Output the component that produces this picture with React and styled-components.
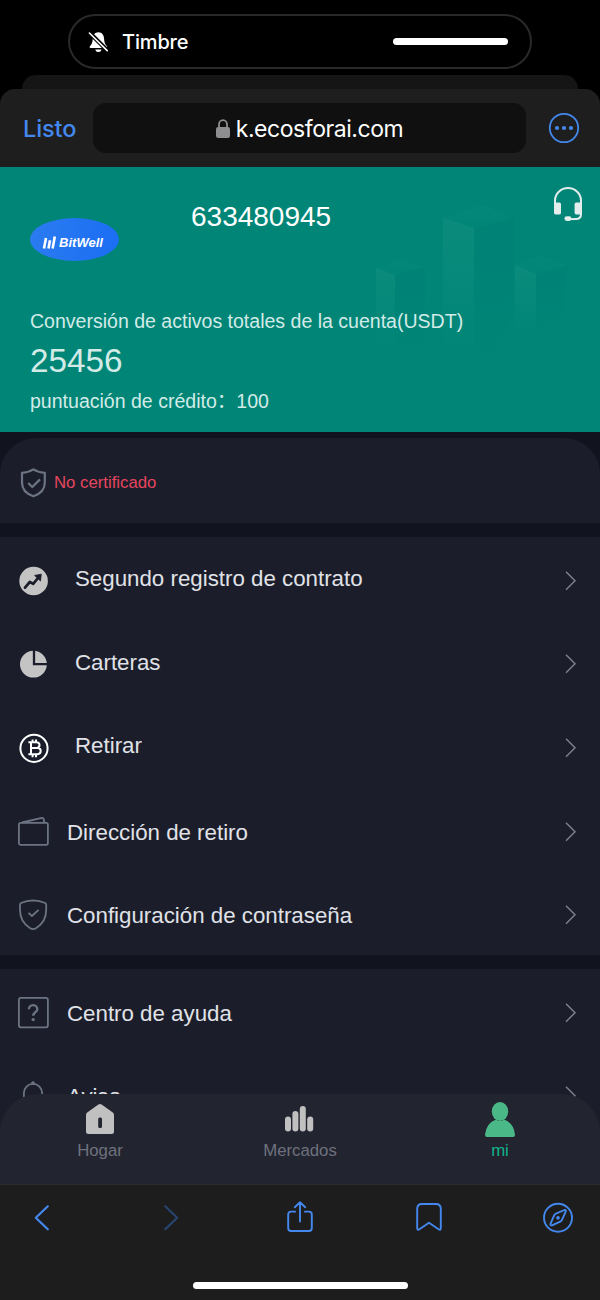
import React from "react";
import styled, { createGlobalStyle } from "styled-components";

const GlobalStyle = createGlobalStyle`
  * {
    box-sizing: border-box;
  }
  body {
    margin: 0;
    background-color: #000;
    font-family: "Liberation Sans", "Noto Sans CJK SC", sans-serif;
  }
  svg {
    display: block;
    flex-shrink: 0;
  }
`;

const Phone = styled.div`
  display: flex;
  flex-direction: column;
  width: 600px;
  height: 1300px;
  overflow: hidden;
  background-color: #000;
`;

const StatusArea = styled.div`
  display: flex;
  flex-direction: column;
  align-items: center;
  padding-top: 14px;
  height: 89px;
`;

const RingPill = styled.div`
  display: flex;
  align-items: center;
  width: 464px;
  height: 55px;
  flex-shrink: 0;
  padding: 0 22px 0 18px;
  border: 2px solid #292929;
  border-radius: 28px;
`;

const RingText = styled.span`
  flex: 1;
  margin-left: 12px;
  color: #fff;
  font-family: Inter, sans-serif;
  font-size: 20px;
  font-weight: 500;
  letter-spacing: -0.15px;
`;

const RingLevel = styled.div`
  width: 115px;
  height: 7px;
  border-radius: 4px;
  background-color: #fff;
`;

const BackSheet = styled.div`
  width: 556px;
  height: 14px;
  margin-top: 6px;
  border-radius: 14px 14px 0 0;
  background-color: #151515;
`;

const BrowserBar = styled.div`
  display: flex;
  align-items: center;
  height: 78px;
  padding: 0 20px 0 23px;
  border-radius: 15px 15px 0 0;
  background-color: #1e1e1e;
`;

const Done = styled.span`
  width: 70px;
  color: #4488ee;
  font-family: Inter, sans-serif;
  font-size: 23.5px;
  font-weight: 500;
  letter-spacing: -0.1px;
`;

const Address = styled.div`
  display: flex;
  align-items: center;
  justify-content: center;
  gap: 6px;
  width: 433px;
  height: 50px;
  margin-right: 22px;
  padding-top: 1px;
  border-radius: 13px;
  background-color: #101010;
  color: #fff;
  font-family: Inter, sans-serif;
  font-size: 23px;
  letter-spacing: -0.45px;
`;

const Page = styled.div`
  position: relative;
  height: 1017px;
  overflow: hidden;
  background-color: #11141f;
`;

const Hero = styled.div`
  position: relative;
  height: 265px;
  margin-bottom: 6px;
  padding: 20px 17px 0 30px;
  background-color: #008577;
  color: #d3ebe7;
`;

const HeroArt = styled.svg`
  position: absolute;
  top: 0;
  right: 0;
`;

const HeroTop = styled.div`
  position: relative;
  display: flex;
  align-items: flex-start;
  height: 118px;
`;

const Logo = styled.div`
  display: flex;
  align-items: center;
  justify-content: center;
  gap: 3px;
  width: 89px;
  height: 43px;
  margin-top: 31px;
  padding-top: 5px;
  padding-right: 4px;
  border-radius: 50%;
  background: linear-gradient(100deg, #2b7cf0, #1b6df3);
  color: #fff;
  font-size: 13px;
  font-style: italic;
  font-weight: 700;
`;

const UserId = styled.span`
  flex: 1;
  margin: 13px 0 0 72px;
  color: #fff;
  font-size: 28px;
  line-height: 34px;
`;

const HeroText = styled.div`
  position: relative;
  font-size: ${(props) => props.size || "19.55px"};
  line-height: ${(props) => props.height || "32px"};
  white-space: nowrap;
`;

const CertCard = styled.div`
  display: flex;
  align-items: center;
  height: 85px;
  padding: 4px 0 0 18px;
  margin-bottom: 14px;
  border-radius: 36px 36px 0 0;
  background-color: #1b1e2a;
`;

const CertText = styled.span`
  margin-left: 4px;
  color: #e6455f;
  font-size: 16.75px;
`;

const Menu = styled.div`
  margin-bottom: 14px;
  background-color: #1b1e2a;
`;

const MenuRow = styled.div`
  display: flex;
  align-items: center;
  height: 83.6px;
  padding: 4px 22px 0 18px;
`;

const MenuLabel = styled.span`
  flex: 1;
  padding-left: ${(props) => (props.$wide ? "25px" : "17px")};
  padding-top: ${(props) => (props.$wide ? "0" : "2px")};
  padding-bottom: ${(props) => (props.$wide ? "3px" : "0")};
  color: #e0e2e8;
  font-size: 22.3px;
  line-height: 26px;
`;

const TabBar = styled.div`
  position: absolute;
  left: 0;
  right: 0;
  bottom: 0;
  display: grid;
  grid-template-columns: repeat(3, 1fr);
  height: 90px;
  border-radius: 38px 38px 0 0;
  background-color: #222430;
`;

const Tab = styled.div`
  display: flex;
  flex-direction: column;
  align-items: center;
  padding-top: 6px;
  color: ${(props) => (props.$active ? "#12b48a" : "#6f727e")};
  font-size: 16.75px;
  line-height: 20px;

  svg {
    margin-bottom: 3px;
  }
`;

const Toolbar = styled.div`
  display: flex;
  flex-direction: column;
  align-items: center;
  height: 116px;
  border-top: 1px solid #2b2b2d;
  background-color: #1d1d1d;
`;

const ToolbarIcons = styled.div`
  display: flex;
  justify-content: space-between;
  width: 100%;
  height: 97px;
  padding: 16px 27px 0;
`;

const HomeIndicator = styled.div`
  width: 215px;
  height: 7px;
  border-radius: 4px;
  background-color: #fff;
`;

const MenuIcon = (props) => (
  <svg width="32" height="32" viewBox="0 0 32 32" fill="none" stroke="#6c7382" strokeWidth="1.8" strokeLinejoin="round">
    {props.children}
  </svg>
);

const ToolIcon = (props) => (
  <svg
    width="30"
    height="34"
    viewBox="0 0 30 34"
    fill="none"
    stroke={props.color || "#4488ee"}
    strokeWidth={props.weight || "1.9"}
    strokeLinecap="round"
    strokeLinejoin="round"
  >
    {props.children}
  </svg>
);

const Chevron = () => (
  <svg width="14" height="20" viewBox="0 0 14 20" fill="none" stroke="#7c7f8a" strokeWidth="1.5">
    <path d="M2 0.7L11 9.7L2 18.7" />
  </svg>
);

const TrendIcon = () => (
  <MenuIcon>
    <circle cx="15.6" cy="16" r="14.3" fill="#c4c4c4" stroke="none" />
    <path d="M7 22.6L11.8 17L15.2 18.8L20 13" stroke="#1b1e2a" strokeWidth="2.7" strokeLinecap="round" />
    <path d="M16.6 10.4L23.3 9.2L22.5 16Z" fill="#1b1e2a" stroke="#1b1e2a" strokeWidth="0.8" />
  </MenuIcon>
);

const PieIcon = () => (
  <MenuIcon>
    <circle cx="15.4" cy="16.2" r="13.4" fill="#c4c4c4" stroke="none" />
    <path d="M16 2V16.2H30" stroke="#1b1e2a" strokeWidth="2.3" strokeLinejoin="miter" />
  </MenuIcon>
);

const BitcoinIcon = () => (
  <MenuIcon>
    <g stroke="#fff" strokeWidth="2">
      <circle cx="16" cy="16.3" r="13.6" />
      <path d="M10.4 10.2H18.6A2.9 2.9 0 0 1 18.6 16H13M18.6 16H19.6A3.1 3.1 0 0 1 19.6 22.2H10.4M13 10.2V22.2M14.6 7.4V10.2M18 7.4V10.2M14.6 22.2V25.2M18 22.2V25.2" />
    </g>
  </MenuIcon>
);

const WalletIcon = () => (
  <MenuIcon>
    <rect x="0.9" y="6.8" width="29" height="22" rx="1.8" />
    <path d="M4 6.5L23.8 1.9Q25.3 1.6 25.6 3L26.4 6.5" />
  </MenuIcon>
);

const PasswordIcon = () => (
  <MenuIcon>
    <path d="M15.1 1.4Q21.5 1.6 27.2 4Q28.2 4.5 28.2 5.6V11Q28.2 23 18 29.2Q15.1 31 12.2 29.2Q2 23 2 11V5.6Q2 4.5 3 4Q8.7 1.6 15.1 1.4Z" />
    <path d="M10.5 13.8L13.9 17L20.6 10.8" />
  </MenuIcon>
);

const HelpIcon = () => (
  <MenuIcon>
    <rect x="0.9" y="0.9" width="29" height="29.4" rx="2" />
    <path d="M10.9 12.2A4.2 4.1 0 0 1 19.3 12.2C19.3 15 15.2 15.4 15.2 18.8" strokeWidth="2.4" />
    <circle cx="15.2" cy="22.6" r="1.7" fill="#6c7382" stroke="none" />
  </MenuIcon>
);

const BellIcon = () => (
  <MenuIcon>
    <path d="M5.9 25V13A9.1 9.1 0 0 1 24.1 13V25M2 25H28" />
    <circle cx="15" cy="3.2" r="1" fill="#6c7382" />
  </MenuIcon>
);

const accountRows = [
  { id: 0, text: "Segundo registro de contrato", icon: <TrendIcon />, wide: true },
  { id: 1, text: "Carteras", icon: <PieIcon />, wide: true },
  { id: 2, text: "Retirar", icon: <BitcoinIcon />, wide: true },
  { id: 3, text: "Dirección de retiro", icon: <WalletIcon /> },
  { id: 4, text: "Configuración de contraseña", icon: <PasswordIcon /> },
];

const helpRows = [
  { id: 0, text: "Centro de ayuda", icon: <HelpIcon /> },
  { id: 1, text: "Aviso", icon: <BellIcon /> },
];

const MenuList = ({ rows }) => (
  <Menu>
    {rows.map((row) => (
      <MenuRow key={row.id}>
        {row.icon}
        <MenuLabel $wide={row.wide}>{row.text}</MenuLabel>
        <Chevron />
      </MenuRow>
    ))}
  </Menu>
);

const fades = [
  { id: "light", color: "#2fa08d", opacity: 0.22 },
  { id: "dark", color: "#006f68", opacity: 0.12 },
];

const HeroBars = () => (
  <HeroArt width="260" height="265" viewBox="0 0 260 265">
    <defs>
      {fades.map((f) => (
        <linearGradient key={f.id} id={f.id} x1="0" y1="0" x2="0" y2="1">
          <stop offset="0" stopColor={f.color} stopOpacity={f.opacity} />
          <stop offset="1" stopColor={f.color} stopOpacity="0" />
        </linearGradient>
      ))}
    </defs>
    <g fill="url(#light)">
      <path d="M103 51L134 61V190H103Z" />
      <path d="M36 101L55 108V185H36Z" />
      <path d="M175 98L196 107V170H175Z" />
    </g>
    <g fill="url(#light)" opacity="0.5">
      <path d="M103 51L143 38L174 51L134 61Z" />
      <path d="M36 101L59 93L85 100L55 108Z" />
      <path d="M175 98L200 89L228 99L196 107Z" />
    </g>
    <g fill="url(#dark)">
      <path d="M134 61L174 51V145L148 200H134Z" />
      <path d="M55 108L85 100V185H55Z" />
      <path d="M196 107L228 99L222 150L196 166Z" />
    </g>
  </HeroArt>
);

const App = () => {
  return (
    <Phone>
      <GlobalStyle />
      <StatusArea>
        <RingPill>
          <svg width="22" height="22" viewBox="0 0 22 22">
            <path d="M10.4 1.3C6.8 1.3 4.8 4.2 4.7 8C4.6 12 3.4 13.4 1.8 15.2Q1 17 2.6 17H18.2Q19.8 17 19 15.2C17.4 13.4 16.2 12 16.1 8C16 4.2 14 1.3 10.4 1.3Z" fill="#fff" />
            <path d="M7.2 18.5H13.6Q12.9 21 10.4 21Q7.9 21 7.2 18.5Z" fill="#fff" />
            <path d="M1.4 1.6L19.4 19.4" stroke="#000" strokeWidth="4.2" />
            <path d="M1.4 2L19.2 19.6" stroke="#fff" strokeWidth="1.6" strokeLinecap="round" />
          </svg>
          <RingText>Timbre</RingText>
          <RingLevel />
        </RingPill>
        <BackSheet />
      </StatusArea>
      <BrowserBar>
        <Done>Listo</Done>
        <Address>
          <svg width="14" height="20" viewBox="0 0 14 20">
            <rect x="0" y="8" width="14" height="11" rx="2.2" fill="#8e8e90" />
            <path d="M3 9V5.5A4 4.3 0 0 1 11 5.5V9" fill="none" stroke="#8e8e90" strokeWidth="1.8" />
          </svg>
          k.ecosforai.com
        </Address>
        <svg width="32" height="32" viewBox="0 0 32 32">
          <circle cx="16" cy="16" r="14.2" fill="none" stroke="#4488ee" strokeWidth="1.8" />
          <g fill="#4488ee">
            <circle cx="9" cy="16" r="2.1" />
            <circle cx="16" cy="16" r="2.1" />
            <circle cx="23" cy="16" r="2.1" />
          </g>
        </svg>
      </BrowserBar>
      <Page>
        <Hero>
          <HeroBars />
          <HeroTop>
            <Logo>
              <svg width="14" height="13" viewBox="0 0 14 13" stroke="#fff" strokeWidth="2.6">
                <path d="M2 12.5L4 2M6.5 12.5L8 4.2M10.6 12.5L12.8 0.5" />
              </svg>
              BitWell
            </Logo>
            <UserId>633480945</UserId>
            <svg width="30" height="36" viewBox="0 0 30 36" fill="none" stroke="#e3eeec" strokeWidth="2">
              <path d="M2 17V13.5A13 12.5 0 0 1 28 13.5V27Q28 32 23 32.1L15 32.2" />
              <rect x="1" y="15.6" width="7" height="11.8" rx="1.6" fill="#e3eeec" stroke="none" />
              <rect x="21.6" y="15.6" width="7" height="11.8" rx="1.6" fill="#e3eeec" stroke="none" />
              <rect x="11.4" y="29.2" width="7" height="4.8" rx="2.4" fill="#e3eeec" stroke="none" />
            </svg>
          </HeroTop>
          <HeroText>Conversión de activos totales de la cuenta(USDT)</HeroText>
          <HeroText size="33.3px" height="48px">25456</HeroText>
          <HeroText>puntuación de crédito：100</HeroText>
        </Hero>
        <CertCard>
          <MenuIcon>
            <path d="M15.4 2.4Q20.5 5.6 26.8 5.8V15.5Q26.8 25.5 15.4 29.2Q4 25.5 4 15.5V5.8Q10.3 5.6 15.4 2.4Z" strokeWidth="2.2" />
            <path d="M10.2 16L14.3 20L22 12.4" strokeWidth="2.2" />
          </MenuIcon>
          <CertText>No certificado</CertText>
        </CertCard>
        <MenuList rows={accountRows} />
        <MenuList rows={helpRows} />
        <TabBar>
          <Tab>
            <svg width="30" height="38" viewBox="0 0 30 38">
              <path d="M13.4 4.6Q15 3.4 16.6 4.6L27.8 12.6Q29 13.5 29 15V31.5Q29 34 26.5 34H3.5Q1 34 1 31.5V15Q1 13.5 2.2 12.6Z" fill="#c0c0c0" />
              <rect x="13.2" y="17.5" width="3.8" height="10.5" rx="1.5" fill="#222430" />
            </svg>
            Hogar
          </Tab>
          <Tab>
            <svg width="30" height="38" viewBox="0 0 30 38" fill="#c0c0c0">
              <rect x="0" y="16.5" width="6" height="15" rx="3" />
              <rect x="7.4" y="11" width="6" height="20.5" rx="3" />
              <rect x="14.8" y="6" width="6" height="25.5" rx="3" />
              <rect x="22.2" y="16.5" width="6" height="15" rx="3" />
            </svg>
            Mercados
          </Tab>
          <Tab $active>
            <svg width="30" height="38" viewBox="0 0 30 38" fill="#4bb887">
              <ellipse cx="15" cy="11.5" rx="8.2" ry="9.4" />
              <path d="M11 19.5Q15 22.5 19 19.5Q28.6 23 30 34.5Q30.1 37 28 37H2Q-0.1 37 0 34.5Q1.4 23 11 19.5Z" />
            </svg>
            mi
          </Tab>
        </TabBar>
      </Page>
      <Toolbar>
        <ToolbarIcons>
          <ToolIcon weight="2.2">
            <path d="M20.8 5.3L8.8 16.8L20.8 28.3" />
          </ToolIcon>
          <ToolIcon weight="2.2" color="#26456f">
            <path d="M9.2 5.3L21.2 16.8L9.2 28.3" />
          </ToolIcon>
          <ToolIcon>
            <path d="M10.2 10.6H6Q3.2 10.6 3.2 13.4V27Q3.2 30 6 30H24Q26.8 30 26.8 27V13.4Q26.8 10.6 24 10.6H19.8M15 20.5V1.4M9.8 6.2L15 1.2L20.2 6.2" />
          </ToolIcon>
          <ToolIcon>
            <path d="M3.2 8Q3.2 3 8 3H22Q26.8 3 26.8 8V27Q26.8 29.6 24.6 28.2L15 21.8L5.4 28.2Q3.2 29.6 3.2 27Z" />
          </ToolIcon>
          <ToolIcon>
            <circle cx="15" cy="16.8" r="14" />
            <path d="M21.4 9L13 12.6Q11.6 13.2 11 14.6L7.5 22.8Q7.1 24.8 9 24.3L17.2 20.7Q18.5 20 19.1 18.7L22.7 10.6Q23.2 8.4 21.4 9Z" />
            <circle cx="15" cy="16.8" r="0.9" fill="#4488ee" />
          </ToolIcon>
        </ToolbarIcons>
        <HomeIndicator />
      </Toolbar>
    </Phone>
  );
};

export default App;
